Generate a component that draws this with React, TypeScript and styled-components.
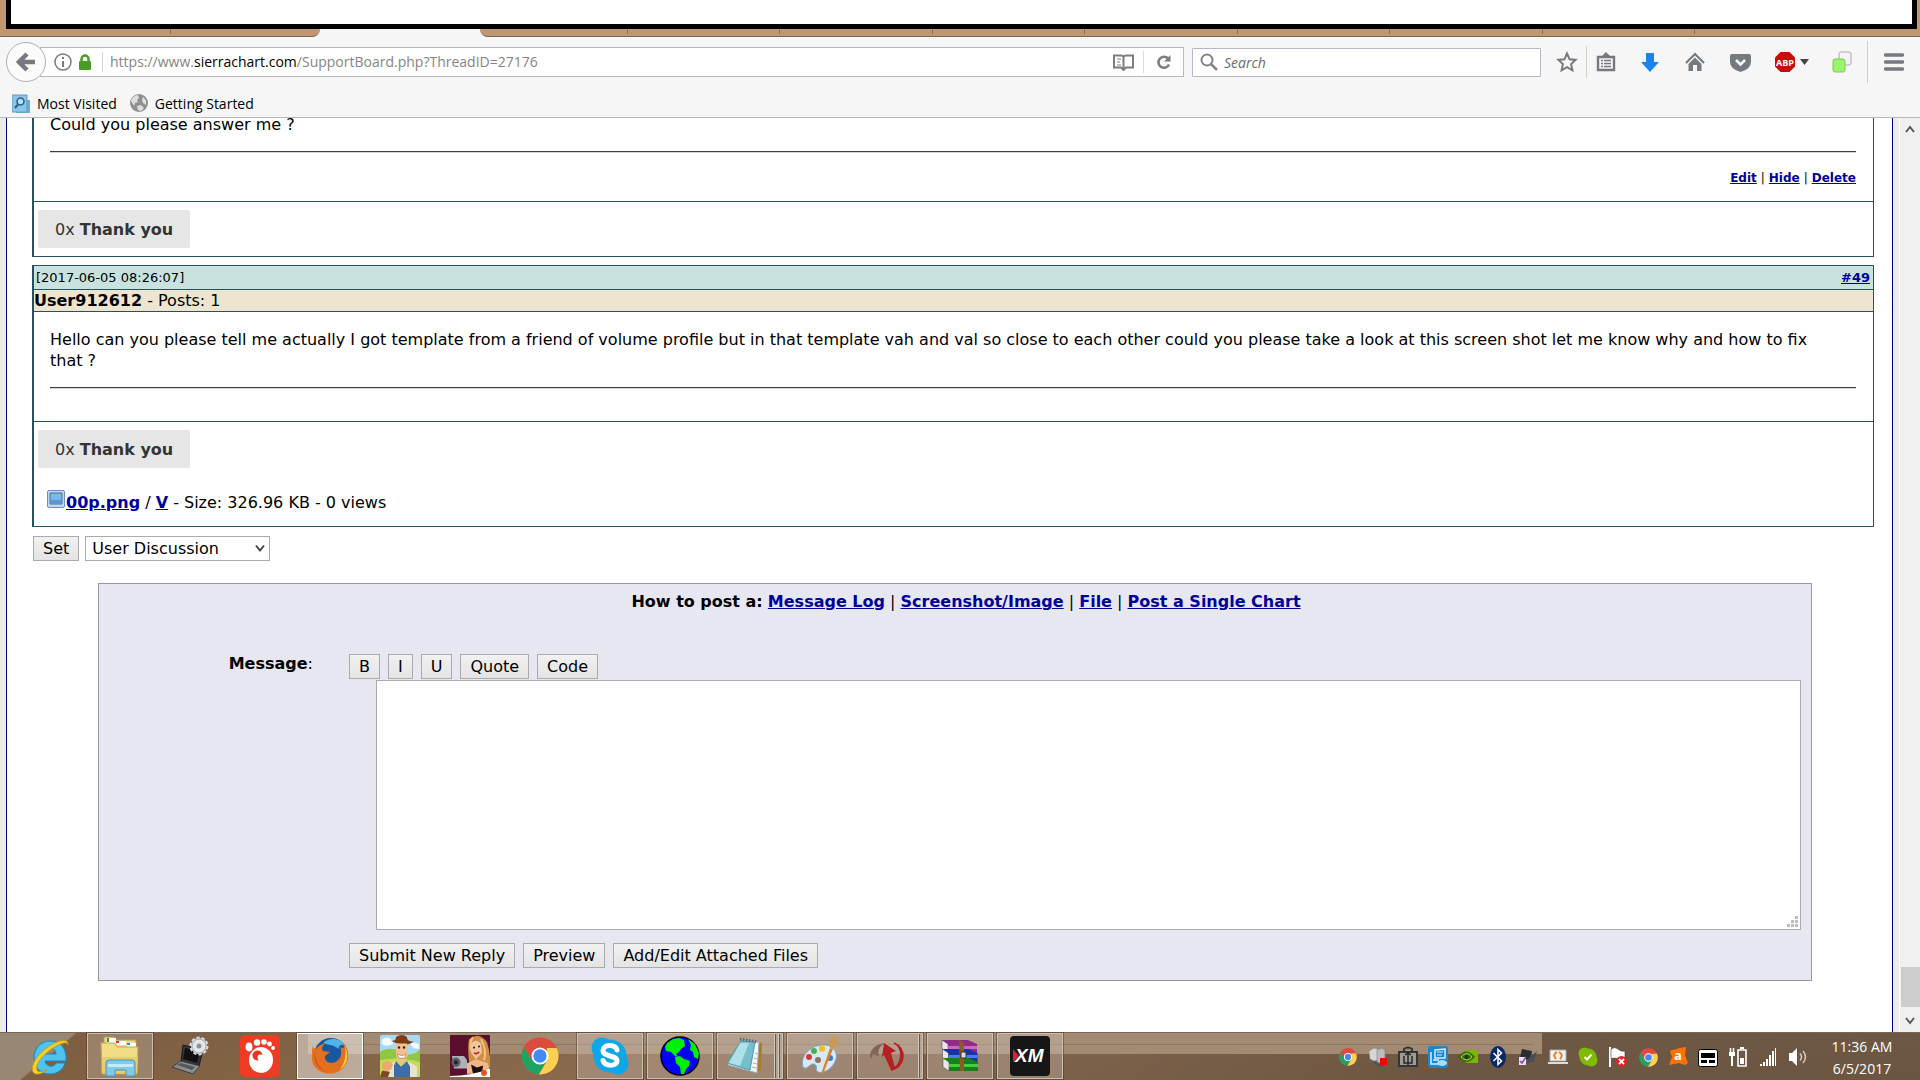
import React from "react";
import styled, { createGlobalStyle } from "styled-components";

const ui = `"Open Sans", "Noto Sans", sans-serif`;
const page = `Verdana, "DejaVu Sans", sans-serif`;
const teal = "#24525e";

const Global = createGlobalStyle`
  * { box-sizing: border-box; }
  body { margin: 0; background: #fff; font-family: ${page}; font-size: 16px; color: #000; }
  button, input, select, textarea { font: inherit; color: inherit; margin: 0; }
  svg { display: block; }
`;

const Screen = styled.div`
  display: flex;
  flex-direction: column;
  height: 100vh;
  overflow: hidden;
`;

/* ---------- window top ---------- */
const TopEdge = styled.div`
  background: #c19670;
  padding: 0 3px 0 6px;
`;
const Frame = styled.div`
  height: 29px;
  background: #fff;
  border: solid #000;
  border-width: 0 5px 5px;
`;
const TabStrip = styled.div`
  display: flex;
  height: 8px;
  flex: none;
  background: #f6f6f6;
`;
const Tab = styled.div<{ $w?: number; $end?: "left" | "right" }>`
  flex: ${(p) => (p.$w ? `0 0 ${p.$w}px` : "1")};
  background: linear-gradient(#8d6c50, #8d6c50) right 0 top 0 / ${(p) => (p.$end === "right" || !p.$w ? 0 : 1)}px 5px no-repeat #c19670;
  border-bottom: 1px solid #7c6450;
  border-bottom-right-radius: ${(p) => (p.$end === "right" ? 10 : 0)}px;
  border-bottom-left-radius: ${(p) => (p.$end === "left" ? 10 : 0)}px;
`;
const ActiveTab = styled.div`
  flex: 0 0 160px;
`;

/* ---------- browser chrome ---------- */
const Chrome = styled.header`
  flex: none;
  background: #f6f6f6;
  border-bottom: 1px solid #b9b9b9;
  font-family: ${ui};
`;
const NavBar = styled.div`
  display: flex;
  align-items: center;
  height: 50px;
  padding-left: 6px;
`;
const BackButton = styled.button`
  width: 40px;
  height: 40px;
  padding: 0;
  border: 1px solid #a9b1bb;
  border-radius: 50%;
  background: #fbfbfb;
  display: grid;
  place-items: center;
  z-index: 1;
`;
const UrlBar = styled.div`
  flex: 1;
  display: flex;
  align-items: center;
  height: 30px;
  margin-left: -6px;
  padding-left: 13px;
  background: #fff;
  border: 1px solid #b4bac5;
`;
const SiteInfo = styled.div`
  display: flex;
  align-items: center;
  gap: 6px;
  height: 20px;
  padding-right: 10px;
  margin-right: 7px;
  border-right: 1px solid #d8d8d8;
`;
const Url = styled.div`
  flex: 1;
  font-size: 14px;
  line-height: 20px;
  color: #858585;
  white-space: nowrap;
  outline: none;
  b { font-weight: 400; color: #000; }
`;
const BarButton = styled.button<{ $line?: boolean }>`
  width: 40px;
  height: 22px;
  padding: 0;
  border: 0;
  border-left: ${(p) => (p.$line ? "1px solid #dcdcdc" : "0")};
  background: none;
  display: grid;
  place-items: center;
`;
const SearchBox = styled.label`
  display: flex;
  align-items: center;
  gap: 6px;
  width: 349px;
  height: 29px;
  margin-left: 8px;
  padding-left: 7px;
  background: #fff;
  border: 1px solid #b4bac5;
  border-radius: 1px;
  input {
    flex: 1;
    border: 0;
    padding: 0;
    outline: none;
    background: none;
    font-size: 14px;
  }
  input::placeholder { font-style: italic; color: #6b6b6b; opacity: 1; }
`;
const Tools = styled.div`
  display: flex;
  align-items: center;
  margin-left: 7px;
`;
const Tool = styled.button<{ $w: number }>`
  width: ${(p) => p.$w}px;
  height: 40px;
  padding: 0;
  border: 0;
  background: none;
  display: flex;
  align-items: center;
  justify-content: center;
  gap: 4px;
`;
const ToolLine = styled.span<{ $h: number }>`
  width: 1px;
  height: ${(p) => p.$h}px;
  background: #cfcfcf;
`;
const Bookmarks = styled.nav`
  display: flex;
  align-items: center;
  gap: 13px;
  height: 30px;
  padding: 4px 0 0 12px;
  a {
    display: flex;
    align-items: center;
    gap: 7px;
    font-size: 14px;
    line-height: 20px;
    color: #000;
    text-decoration: none;
  }
`;

/* ---------- page ---------- */
const Viewport = styled.div`
  flex: 1;
  min-height: 0;
  display: flex;
  overflow: hidden;
  background: #ebedec;
  padding-left: 6px;
`;
const Board = styled.main`
  flex: 1;
  min-width: 0;
  background: #fff;
  border: solid #00008f;
  border-width: 0 1px;
  padding: 0 18px 0 25px;
  margin-right: 6px;
`;
const Post = styled.article<{ $cut?: boolean }>`
  border: 1px solid ${teal};
  border-left-width: 2px;
  margin-top: ${(p) => (p.$cut ? "-22px" : "8px")};
`;
const PostTop = styled.div`
  display: flex;
  justify-content: space-between;
  align-items: center;
  height: 24px;
  padding: 0 3px 0 2px;
  background: #c8e3df;
  border-bottom: 1px solid ${teal};
  font-size: 13px;
`;
const PostUser = styled.div`
  height: 22px;
  line-height: 21px;
  background: #ede5cf;
  border-bottom: 1px solid ${teal};
`;
const Body = styled.div`
  padding: 17px 17px 0 16px;
  border-bottom: 1px solid ${teal};
  p { margin: 0; padding-right: 24px; line-height: 21px; }
  hr {
    height: 2px;
    margin: 16px 0 0;
    border: 0;
    border-top: 1px solid #404040;
    background: #d4d4d4;
  }
`;
const Links = styled.div`
  display: flex;
  justify-content: flex-end;
  gap: 4px;
  height: 48px;
  padding-top: 17px;
  font-size: 12px;
  line-height: 16px;
`;
const Blank = styled.div`
  height: 32px;
`;
const A = styled.a`
  color: #00009c;
  font-weight: 700;
  text-decoration: underline;
`;
const Foot = styled.div`
  padding: 8px 4px;
`;
const Thanks = styled.button`
  display: block;
  height: 38px;
  padding: 0 17px;
  border: 0;
  border-radius: 2px;
  background: #e6e6e6;
  color: #333;
`;
const Attachment = styled.div`
  display: flex;
  align-items: center;
  height: 40px;
  margin: 14px 0 -4px 9px;
  svg { margin: -7px 1px 0 0; }
`;
const Control = styled.button`
  height: 25px;
  padding: 0 9px;
  border: 1px solid #ababab;
  background: linear-gradient(#f1f1f1, #e4e4e4);
  line-height: 20px;
  white-space: nowrap;
`;
const SetRow = styled.div`
  display: flex;
  gap: 6px;
  margin: 9px 0 0 1px;
`;
const SelectWrap = styled.div`
  position: relative;
  select {
    width: 185px;
    height: 25px;
    padding: 0 6px;
    border: 1px solid #ababab;
    border-radius: 0;
    background: #fff;
    appearance: none;
  }
  svg { position: absolute; right: 5px; top: 8px; pointer-events: none; }
`;
const Reply = styled.form`
  margin: 22px 62px 0 66px;
  padding: 8px 10px 12px;
  background: #e7e7f1;
  border: 1px solid #989898;
`;
const HowTo = styled.div`
  padding-left: 22px;
  text-align: center;
  line-height: 20px;
`;
const Fields = styled.div`
  display: grid;
  grid-template-columns: 204px 1fr;
  column-gap: 36px;
  margin-top: 42px;
`;
const FieldLabel = styled.label`
  text-align: right;
  line-height: 20px;
`;
const Buttons = styled.div<{ $gap: number }>`
  display: flex;
  gap: ${(p) => p.$gap}px;
`;
const AreaWrap = styled.div`
  position: relative;
  margin: 1px 0 13px 27px;
  textarea {
    display: block;
    width: 100%;
    height: 250px;
    border: 1px solid #ababb2;
    background: #fff;
    resize: none;
    outline: none;
  }
  svg { position: absolute; right: 3px; bottom: 3px; }
`;
const Scroll = styled.div`
  width: 21px;
  display: flex;
  flex-direction: column;
  align-items: center;
  padding: 7px 0;
  background: #f0f0f0;
  border-left: 1px solid #fff;
`;
const Thumb = styled.div`
  width: 19px;
  height: 40px;
  margin: auto 0 10px;
  background: #cdcdcd;
`;

/* ---------- taskbar ---------- */
const Taskbar = styled.footer`
  flex: none;
  display: flex;
  height: 48px;
  padding-left: 17px;
  border-top: 1px solid #786758;
  background:
    linear-gradient(#8f7862, #8f7862) 308px 11px / 1225px 1px no-repeat,
    linear-gradient(#a38a73, #a38a73) 308px 0 / 1234px 21px no-repeat,
    linear-gradient(140deg, #988773 0 48px, transparent 50px) 0 0 / 110px 48px no-repeat,
    linear-gradient(170deg, rgba(60, 40, 25, 0.12), transparent 40%, rgba(60, 40, 25, 0.2)),
    linear-gradient(90deg, #846444, #8a6a4e 30%, #80654d 55%, #745d47 75%, #77614c);
`;
const Apps = styled.div`
  display: flex;
  gap: 4px;
  flex: 1;
`;
const TaskButton = styled.button<{ $open?: boolean; $active?: boolean; $stack?: number }>`
  position: relative;
  width: 66px;
  height: 46px;
  padding: 0 ${(p) => (p.$stack ? 4 * p.$stack + 2 : 0)}px 0 0;
  border: ${(p) => (p.$active ? "1px solid #fff" : p.$open ? "1px solid #cbbfb4" : "1px solid transparent")};
  outline: ${(p) => (p.$open || p.$active ? "1px solid rgba(70,50,35,.45)" : "none")};
  background: ${(p) => (p.$active ? "rgba(255,255,255,.45)" : p.$open ? "rgba(235,225,220,.26)" : "none")};
  display: grid;
  place-items: center;
  &::after {
    content: "";
    display: ${(p) => (p.$stack ? "block" : "none")};
    position: absolute;
    top: 0;
    bottom: 0;
    right: 0;
    width: ${(p) => 4 * (p.$stack || 0)}px;
    background: repeating-linear-gradient(90deg, #d3c8be 0 1px, #6b5848 1px 2px, #b5a393 2px 4px);
  }
`;
const Tray = styled.div`
  display: flex;
  align-items: center;
  gap: 8px;
  padding-top: 1px;
  button {
    width: 22px;
    height: 24px;
    padding: 0;
    border: 0;
    background: none;
    display: grid;
    place-items: center;
  }
`;
const Clock = styled.time`
  width: 111px;
  padding: 3px 5px 0 0;
  font-family: ${ui};
  font-size: 14px;
  line-height: 22px;
  text-align: center;
  color: #fff;
`;

/* ---------- drawings ---------- */
const ChromeLogo = ({ s }: { s: number }) => (
  <svg width={s} height={s} viewBox="0 0 40 40">
    <circle cx="20" cy="20" r="19.5" fill="#dd4b3e" />
    <path d="M3.2 10.5A19.5 19.5 0 0 0 19 39.4L27.5 24.5 20 20 12 24.5z" fill="#1da462" />
    <path d="M37.6 11.5A19.5 19.5 0 0 1 18.8 39.4L28 24 27 11.5z" fill="#fdd150" />
    <path d="M3.2 10.5 11.5 24.5 20 11.5H37.6A19.5 19.5 0 0 0 3.2 10.5z" fill="#dd4b3e" />
    <circle cx="20" cy="20" r="9" fill="#fff" />
    <circle cx="20" cy="20" r="7" fill="#4587f3" />
  </svg>
);

const Explorer = () => (
  <svg width="40" height="42" viewBox="0 0 40 42">
    <path d="M4 2h10l2 3h20v14H4z" fill="#eadb97" stroke="#b39a4f" />
    <path d="M7 3h9v5H7zM17 6h9v4h-9zM27 8h9v4h-9z" fill="#fff" />
    <path d="M7 3h2v4H7z" fill="#2c9a3b" /><path d="M16 6h3v2h-3z" fill="#d33" /><path d="M27 8h3v2h-3z" fill="#248be0" />
    <path d="M1 8h13l3 4h21l-1 27H2z" fill="#f1dd85" stroke="#c6a84f" />
    <path d="M2 22h36l-1 16H2z" fill="#e9cd68" />
    <path d="M6 41V28q0-3 3-3h23q3 0 3 3v13h-9v-6H15v6z" fill="#82cae8" stroke="#4596bd" />
    <path d="M8 29h25v3H8z" fill="#c4ebf8" />
  </svg>
);

const Laptop = () => (
  <svg width="38" height="40" viewBox="0 0 38 40">
    <path d="M12 9 32 14 28 30 10 25z" fill="#33363a" stroke="#17191b" />
    <path d="m14 12 15 4-3 11-14-4z" fill="#111" />
    <path d="m10 25 19 5-7 8L1 31z" fill="#8a8d90" stroke="#3b3d40" />
    <path d="m10 27 14 4-3 3-15-5z" fill="#55585b" />
    <circle cx="28" cy="10" r="8" fill="#d6d9dd" stroke="#d6d9dd" strokeWidth="3" strokeDasharray="3 2" />
    <circle cx="28" cy="10" r="7" fill="#e4e6e9" stroke="#9aa" />
    <circle cx="28" cy="10" r="2.5" fill="#8d9299" />
  </svg>
);

const IE = () => (
  <svg width="42" height="42" viewBox="0 0 42 42">
    <path d="M37 26H16c1 6 9 7 11 2h9c-2 7-8 11-15 11C11 39 5 32 5 23 5 13 12 6 21 6c11 0 17 8 16 20zM16 19h11c0-7-10-8-11 0z" fill="#4cc3f1" stroke="#1f86bf" />
    <path d="M39 10c1-6-7-6-17 0C9 18 1 30 4 37c2 4 9 2 14-2-5 2-9 2-10 0-2-5 5-15 16-22 8-5 14-7 15-3z" fill="#f7cf24" stroke="#c49212" strokeWidth=".8" />
  </svg>
);

const Gom = () => (
  <svg width="40" height="42" viewBox="0 0 40 42">
    <rect width="40" height="42" rx="5" fill="#ee3b24" />
    <ellipse cx="21" cy="25" rx="12" ry="13" fill="#fff" />
    <circle cx="17.500" cy="20.500" r="5" fill="#e9321f" /><circle cx="20.500" cy="22.500" r="3" fill="#fff" />
    <ellipse cx="9" cy="12" rx="3.4" ry="4.4" fill="#fff" />
    <circle cx="17" cy="7.5" r="3.2" fill="#fff" /><circle cx="24" cy="7" r="2.8" fill="#fff" /><circle cx="29.5" cy="9" r="2.4" fill="#fff" /><circle cx="33" cy="13" r="2" fill="#fff" />
  </svg>
);

const Firefox = () => (
  <svg width="38" height="38" viewBox="0 0 38 38">
    <circle cx="20" cy="18" r="17" fill="#19589d" />
    <path d="M12 6c6-6 17-5 22 2-4-1-7 1-6 4-5-4-10-4-16-6z" fill="#4fb4e8" />
    <path d="M2 8c0 3 1 4 3 4 2-3 5-5 9-5-3 2-4 5-2 7l7 1-5 4c-1 6 6 9 12 5 5-3 5-10 3-14 5 3 4 0 3-4 5 5 7 14 3 21-4 8-13 11-21 9C4 34 0 26 1 18c0-4 0-7 1-10z" fill="#e4701e" />
    <path d="M34 9c4 8 3 18-5 24 4-6 7-15 5-24z" fill="#fbd03b" />
    <path d="M4 15c-2 10 4 18 13 20C8 32 4 25 4 15z" fill="#c6401b" />
  </svg>
);

const Farmer = () => (
  <svg width="40" height="42" viewBox="0 0 40 40" preserveAspectRatio="none">
    <rect width="40" height="40" rx="2" fill="#a7daf2" />
    <path d="M2 4q6-3 10 1t-4 5-6-6zM30 8q5-2 9 1v4q-6 1-9-5z" fill="#f4fbff" />
    <path d="M0 16q10-6 20 0t20-2v26H0z" fill="#8fc744" />
    <path d="M0 24q20-4 40 2v14H0z" fill="#c9d957" />
    <path d="M10 5q6 2 6-3 6-4 11 0 0 5 7 4-5 4-12 3T10 5z" fill="#7d3b18" />
    <path d="M16 8h11l1 11q-3 7-7 7t-5-7z" fill="#f2c08d" />
    <path d="M17 18q6 3 9 0l-1 4h-6z" fill="#fff" stroke="#a75a2c" strokeWidth=".5" />
    <circle cx="19" cy="12" r="1.2" fill="#222" /><circle cx="24" cy="12" r="1.2" fill="#222" />
    <path d="M8 40V29l7-4 6 4 7-4 9 5v10z" fill="#e9e2cf" />
    <path d="M14 40V29l2-4 5 5 6-5 3 5v10z" fill="#3f6da5" />
    <path d="M2 27l6-3 5 4-2 5-8 2z" fill="#eaa96f" /><path d="M2 34l8 1-2 5H0z" fill="#7c4a22" />
  </svg>
);

const Model = () => (
  <svg width="40" height="42" viewBox="0 0 40 40" preserveAspectRatio="none">
    <rect width="40" height="40" fill="#5a0f2d" />
    <path d="M19 4q10-8 18 3 4 12 3 24l-8 4-12-4q-3-16-1-27z" fill="#cf8d45" />
    <path d="M21 8q5-5 10 0l1 9-6 6-5-6z" fill="#f3c59c" />
    <path d="M23 2q-4 5-2 13M31 4q6 10 3 20" stroke="#f0c67c" strokeWidth="2" fill="none" />
    <path d="M24 17q3 2 5-1" stroke="#b3202f" strokeWidth="1.5" fill="none" />
    <circle cx="24" cy="12" r="1" fill="#213" /><circle cx="29" cy="11" r="1" fill="#213" />
    <path d="M17 27l9-4 12 4 2 10H17z" fill="#efb78a" />
    <path d="M21 28l6 3 6-2-1 8h-9z" fill="#1c1114" />
    <path d="M2 20h12l3 4v8H4z" fill="#aeb1b8" /><circle cx="6" cy="26" r="4.5" fill="#5b5e66" /><circle cx="6" cy="26" r="2" fill="#222" />
    <path d="M0 40v-1q22 0 40-7v8z" fill="#fff" /><circle cx="34" cy="36" r="3" fill="#e8541c" />
  </svg>
);

const Skype = () => (
  <svg width="38" height="38" viewBox="0 0 38 38">
    <circle cx="11" cy="11" r="10.5" fill="#0ba7e6" /><circle cx="27" cy="27" r="10.5" fill="#0ba7e6" /><circle cx="19" cy="19" r="16.5" fill="#0ba7e6" />
    <path d="M26 13c-1-4-5-4.500-7.500-4.500-4 0-6.500 2-6.500 5 0 7 14 4 14 10.500 0 5.500-12 6-14-.5" fill="none" stroke="#fff" strokeWidth="5" strokeLinecap="round" />
  </svg>
);

const Globe = () => (
  <svg width="40" height="40" viewBox="0 0 40 40">
    <circle cx="20" cy="20" r="19" fill="#0000fe" stroke="#000" strokeWidth="1.500" />
    <path d="M7 7l6-4 6-1 5 2 1 6-4 3-2 3-3 2 2 3-3-1-4-4-5-1-1-4z" fill="#00f000" />
    <path d="M15 21l5-1 4 3 6 2-1 5-3 3-2 5-3 0-1-7-4-4z" fill="#00f000" />
    <path d="M28 3l7 5 4 9-1 6-4-2-1-5-3-2 1-5z" fill="#00f000" />
  </svg>
);

const Notepad = () => (
  <svg width="38" height="38" viewBox="0 0 38 38">
    <path d="M31 5l5 1-1 27-4 2z" fill="#a87a30" />
    <path d="M16 3l17 2-2 31L2 28z" fill="#f2f6f7" stroke="#9ab" />
    <path d="M15 4l14 1-5 28L1 26z" fill="#74bfcd" stroke="#4f98a8" />
    <path d="M14 6h9l-9 23-11-3z" fill="#c6eaf0" opacity=".75" />
    <path d="M14 2l18 3" stroke="#666" strokeWidth="3" strokeDasharray="1.500 1.500" />
    <path d="M26 30l5 1M27 26l4 1M28 21l3 1M29 16l3 1" stroke="#a8b8bd" />
  </svg>
);

const Paint = () => (
  <svg width="40" height="40" viewBox="0 0 40 40">
    <path d="M3 31C0 20 10 10 22 9c10-1 16 6 14 14-3 10-13 15-18 13-4-2 1-6-4-8-4-1-7 7-11 3z" fill="#d5e9f7" stroke="#7ba6c8" />
    <circle cx="18" cy="24" r="3" fill="#8b7460" />
    <circle cx="9" cy="21" r="3" fill="#e03535" /><circle cx="14" cy="15" r="3" fill="#49b04a" /><circle cx="22" cy="12.500" r="3.200" fill="#f3bd27" /><circle cx="30" cy="22" r="3" fill="#3d77dc" />
    <path d="M21 38l9-26 3 1-10 25z" fill="#dd8127" /><path d="M30 12l-1-8 4-4 6 2-1 5-5 6z" fill="#c9995a" />
  </svg>
);

const RedV = () => (
  <svg width="38" height="34" viewBox="0 0 38 34">
    <path d="M3 20C0 12 7 5 17 4c-5 3-8 7-6 13l-6-2z" fill="#7b5a50" opacity=".85" />
    <path d="M16 4l12 8-5 2 4 15-4 2-7-15-2 2z" fill="#b51f26" />
    <path d="M26 4c9 4 10 21-3 27 15-3 16-22 3-27z" fill="#b51f26" stroke="#b51f26" strokeWidth="1.500" />
  </svg>
);

const WinRar = () => (
  <svg width="38" height="34" viewBox="0 0 38 34">
    {[["#8f2c88", "#c66abf"], ["#1634a5", "#4a7cf0"], ["#177f1b", "#43cf3d"]].map(([d, l], i) => (
      <g key={d} transform={`translate(${i / 2} ${i * 9})`}>
        <path d="M1 1l6 4v9l-6-4z" fill="#e8e8e8" stroke="#555" strokeWidth=".6" />
        <path d="M1 1h26l9 4H7z" fill={d} />
        <path d="M7 5h29v9H7z" fill={d} /><path d="M7 7h29v3H7z" fill={l} />
      </g>
    ))}
    <path d="M18 1l5 3v28h-4z" fill="#8b5a25" /><path d="M20 13h5v6h-5z" fill="#ddd" stroke="#333" />
  </svg>
);

const Xm = () => (
  <svg width="40" height="40" viewBox="0 0 40 40">
    <rect width="40" height="40" rx="4" fill="#161616" />
    <path d="M3 13l6 7-6 6z" fill="#e01f26" />
    <text x="5" y="26" fontFamily="Liberation Sans, sans-serif" fontWeight="700" fontStyle="italic" fontSize="19" fill="#fff">XM</text>
  </svg>
);

const g = "#757a80";

const trayIcons: [string, React.ReactNode][] = [
  ["Chrome", <ChromeLogo s={18} />],
  ["Devices", <svg width="20" height="20" viewBox="0 0 20 20"><path d="M1 4l5-3 4 1v11l-4 1-4-2z" fill="#d6d6d6" stroke="#8a8a8a" strokeWidth=".6" /><path d="M9 3l5-2 3 2v11l-5 2-3-1z" fill="#bdbdbd" stroke="#7c7c7c" strokeWidth=".6" /><path d="M6 15l6 4 4-2" fill="none" stroke="#3e5a5a" strokeWidth="2" /><path d="M12 11h7v7h-7z" fill="#f00" /></svg>],
  ["Security", <svg width="20" height="22" viewBox="0 0 20 22"><path d="M6 6V3q4-3 8 0v3" fill="none" stroke="#30363a" strokeWidth="2" /><path d="M1 6h18v14H1z" fill="#a39a8d" stroke="#30363a" strokeWidth="2" /><path d="M10 7v12M6 10v7h8v-7M7 9l3-2 3 2" fill="none" stroke="#22282c" strokeWidth="1.500" /></svg>],
  ["Display", <svg width="20" height="22" viewBox="0 0 20 22"><rect width="20" height="22" rx="3" fill="#1887d2" /><path d="M7 4l10-1v9H7zM3 6v12h7M5 14h6" fill="none" stroke="#d8efff" strokeWidth="1.500" /><path d="M9 6h6M9 9h5" stroke="#d8efff" /><ellipse cx="14" cy="17" rx="5" ry="3" fill="#a9dcf8" /></svg>],
  ["NVIDIA", <svg width="20" height="16" viewBox="0 0 20 16"><path d="M8 1h12v13H8z" fill="#76b900" /><path d="M0 8q8-11 17 0-9 10-17 0z" fill="#3c6d0a" /><path d="M3 8q6-7 11 0-5 6-11 0z" fill="none" stroke="#a9d94d" /><circle cx="8.500" cy="8" r="2" fill="#1d3707" /></svg>],
  ["Bluetooth", <svg width="16" height="22" viewBox="0 0 16 22"><ellipse cx="8" cy="11" rx="8" ry="11" fill="#0a2a66" /><path d="M3.500 7l8 8L8 18.500v-15L11.500 7l-8 8" fill="none" stroke="#fff" strokeWidth="1.500" /></svg>],
  ["Tablet", <svg width="20" height="20" viewBox="0 0 20 20"><path d="M4 2l10 2-2 9-10-2z" fill="#2b2d33" /><path d="M10 12l9-8-3 10-8 3z" fill="#4b4e57" /><path d="M1 10h7v8H1z" fill="#e8e2f0" /><path d="M2 14l2 2 4-6" fill="none" stroke="#8a3fae" strokeWidth="1.500" /></svg>],
  ["Java", <svg width="20" height="16" viewBox="0 0 20 16"><path d="M2 1h16v11H2z" fill="#f3f3f3" stroke="#aaa" /><path d="M0 13h20v2H0z" fill="#dcdcdc" /><path d="M9 3q-5 3-1 7M11 3q5 3 1 7" fill="none" stroke="#ee7b1a" strokeWidth="2" /></svg>],
  ["Skype", <svg width="20" height="20" viewBox="0 0 20 20"><circle cx="6.500" cy="6.500" r="6" fill="#7fba00" /><circle cx="13.500" cy="13.500" r="6" fill="#7fba00" /><circle cx="10" cy="10" r="8.500" fill="#7fba00" /><path d="M6.500 10l2.500 2.500 4.500-5" fill="none" stroke="#fff" strokeWidth="2" /></svg>],
  ["Action Center", <svg width="20" height="22" viewBox="0 0 20 22"><path d="M2 1v20" stroke="#fff" strokeWidth="2" /><path d="M3 3q4-3 7 0t7 2v8q-3 2-7 0t-7 0z" fill="#fff" stroke="#333" strokeWidth=".6" /><circle cx="13.500" cy="15.500" r="5.500" fill="#e0212b" /><path d="M11 13l5 5M16 13l-5 5" stroke="#fff" strokeWidth="1.800" /></svg>],
  ["Chrome", <ChromeLogo s={19} />],
  ["Avast", <svg width="20" height="22" viewBox="0 0 20 22"><path d="M4 4q4 0 7-2l7-1-1 8 3 8-3 2-6-2-5 1-5 1 3-8-2-6z" fill="#ff7200" /><text x="6" y="14" fontFamily="Open Sans, sans-serif" fontWeight="700" fontSize="13" fill="#fff">a</text></svg>],
  ["Touchpad", <svg width="20" height="20" viewBox="0 0 20 20"><rect x=".5" y="2.500" width="19" height="17" rx="2" fill="#fff" stroke="#000" /><path d="M3 6h14v5H3zM3 13h6v3H3zM11 13h6v3h-6z" fill="#000" /></svg>],
  ["Battery", <svg width="20" height="20" viewBox="0 0 20 20"><path d="M2.500 1v4M5.500 1v4" stroke="#fff" strokeWidth="1.500" /><path d="M1 5h6v4H1zM3 9h2v10H3z" fill="#fff" /><path d="M10 3h8v16h-8z" fill="none" stroke="#fff" strokeWidth="1.600" /><path d="M12 0h4v2h-4zM12 11h4v6h-4z" fill="#fff" /></svg>],
  ["Network", <svg width="18" height="20" viewBox="0 0 18 20"><path d="M1 17h2v2H1zM4 15h2v4H4zM7 12h2v7H7zM10 8h2v11h-2zM13 4h2v15h-2zM16 1h1v18h-1z" fill="#fff" /></svg>],
  ["Volume", <svg width="20" height="20" viewBox="0 0 20 20"><path d="M1 6h3l5-5v18l-5-5H1z" fill="#fff" /><path d="M12 6.500q3 3.500 0 7M15 4q5 6 0 12" fill="none" stroke="#d3c9bf" strokeWidth="1.500" /></svg>],
];

const ThankYou = () => (
  <Thanks type="button">0x <b>Thank you</b></Thanks>
);

export default function App() {
  return (
    <Screen>
      <Global />
      <TopEdge><Frame /></TopEdge>
      <TabStrip>
        <Tab $w={171} />
        <Tab $w={149} $end="right" />
        <ActiveTab />
        <Tab $w={148} $end="left" />
        {[0, 1, 2, 3, 4, 5, 6].map((i) => <Tab key={i} $w={i % 2 ? 153 : 152} />)}
        <Tab />
      </TabStrip>
      <Chrome>
        <NavBar>
          <BackButton aria-label="Back">
            <svg width="20" height="20" viewBox="0 0 20 20"><path d="M19 10H4M11 2l-8 8 8 8" fill="none" stroke={g} strokeWidth="4.500" /></svg>
          </BackButton>
          <UrlBar>
            <SiteInfo>
              <svg width="18" height="18" viewBox="0 0 18 18"><circle cx="9" cy="9" r="8" fill="none" stroke="#7b7b7b" strokeWidth="1.500" /><path d="M8 4h2v2H8zM8 8h2v6H8z" fill="#7b7b7b" /></svg>
              <svg width="14" height="16" viewBox="0 0 14 16"><path d="M3.500 8V5a3.500 3.500 0 0 1 7 0v3" fill="none" stroke="#4c9b26" strokeWidth="2.500" /><rect x="1" y="7" width="12" height="9" rx="1" fill="#4c9b26" /></svg>
            </SiteInfo>
            <Url role="textbox" aria-label="Address">https://www.<b>sierrachart.com</b>/SupportBoard.php?ThreadID=27176</Url>
            <BarButton aria-label="Reader view">
              <svg width="21" height="17" viewBox="0 0 21 17"><path d="M1 1.500h7q2 0 2.500 1.500Q11 1.500 13 1.500h7v12h-7L10.500 16 8 13.500H1zM10.500 3v11" fill="none" stroke="#7d7d7d" strokeWidth="2" /><path d="M4 5h4M4 8h3M4 11h4" stroke="#7d7d7d" /></svg>
            </BarButton>
            <BarButton $line aria-label="Reload">
              <svg width="16" height="16" viewBox="0 0 16 16"><path d="M13 10.500a5.500 5.500 0 1 1-1-6" fill="none" stroke="#7d7d7d" strokeWidth="2.600" /><path d="M14.500 1v6.500H8z" fill="#7d7d7d" /></svg>
            </BarButton>
          </UrlBar>
          <SearchBox>
            <svg width="18" height="18" viewBox="0 0 18 18"><circle cx="7" cy="7" r="5.500" fill="none" stroke="#858585" strokeWidth="2" /><path d="M11 11l6 6" stroke="#858585" strokeWidth="2.500" /></svg>
            <input type="text" placeholder="Search" aria-label="Search" />
          </SearchBox>
          <Tools>
            <Tool $w={38} aria-label="Bookmark"><svg width="22" height="22" viewBox="0 0 22 22"><path d="M11 2.500l2.600 5.800 6 .6-4.500 4.200 1.300 6.200L11 16.200l-5.400 3.100 1.300-6.200L2.400 8.900l6-.6z" fill="none" stroke={g} strokeWidth="2" /></svg></Tool>
            <ToolLine $h={32} />
            <Tool $w={38} aria-label="Bookmarks list"><svg width="20" height="20" viewBox="0 0 20 20"><path d="M2 5h16v13H2z" fill="none" stroke={g} strokeWidth="2.400" /><path d="M6 4l4-4 4 4z" fill={g} /><path d="M5 8.500h2M8 8.500h7M5 11.500h2M8 11.500h7M5 14.500h2M8 14.500h7" stroke={g} strokeWidth="1.500" /></svg></Tool>
            <Tool $w={50} aria-label="Downloads"><svg width="20" height="20" viewBox="0 0 20 20"><path d="M6 1h8v9h5l-9 10L1 10h5z" fill="#1a83ec" /></svg></Tool>
            <Tool $w={40} aria-label="Home"><svg width="20" height="20" viewBox="0 0 20 20"><path d="M1 11l9-9 9 9" fill="none" stroke={g} strokeWidth="2.200" /><path d="M3.500 12L10 5.500l6.500 6.500v7H12v-6H8v6H3.500z" fill={g} /></svg></Tool>
            <Tool $w={50} aria-label="Pocket"><svg width="21" height="19" viewBox="0 0 21 19"><path d="M2 1h17q2 0 2 2v6q0 7-10.500 10Q0 16 0 9V3q0-2 2-2z" fill={g} /><path d="M6 7l4.500 4.500L15 7" fill="none" stroke="#fff" strokeWidth="2.500" /></svg></Tool>
            <Tool $w={52} aria-label="Adblock Plus">
              <svg width="22" height="22" viewBox="0 0 22 22"><path d="M6.500 1h9L21 6.500v9L15.500 21h-9L1 15.500v-9z" fill="#cc0a0a" /><text x="11" y="14.500" textAnchor="middle" fontFamily="Open Sans, sans-serif" fontWeight="700" fontSize="9" fill="#fff">ABP</text></svg>
              <svg width="9" height="6" viewBox="0 0 9 6"><path d="M0 0h9L4.500 6z" fill="#444" /></svg>
            </Tool>
            <Tool $w={50} aria-label="Extension"><svg width="20" height="22" viewBox="0 0 20 22"><rect x="7" y="1" width="12" height="13" rx="2" fill="#f4f4f4" stroke="#aaa" /><rect x="1" y="8" width="12" height="13" rx="2" fill="#99f56c" stroke="#7ec65c" /></svg></Tool>
            <ToolLine $h={42} />
            <Tool $w={52} aria-label="Menu"><svg width="20" height="18" viewBox="0 0 20 18"><path d="M1.500 2h17M1.500 9h17M1.500 16h17" stroke={g} strokeWidth="3.500" strokeLinecap="round" /></svg></Tool>
          </Tools>
        </NavBar>
        <Bookmarks>
          <a href="#visited">
            <svg width="18" height="20" viewBox="0 0 18 20"><path d="M6 6h12v13H4z" fill="#6aaed8" /><path d="M0 1h15v17H0z" fill="#8cc5e6" stroke="#5b9cc6" /><circle cx="8.500" cy="7.500" r="3.500" fill="#b9dff2" stroke="#2a618f" strokeWidth="1.600" /><path d="M6 10.500L3 14" stroke="#2a618f" strokeWidth="2" /></svg>
            Most Visited
          </a>
          <a href="#started">
            <svg width="18" height="20" viewBox="0 0 18 20"><circle cx="9" cy="9" r="9" fill="#8f8f8f" /><path d="M1 7q1-5 7-6l1 3-2 2 1 2-3 1-1 3zM7 12l4-1 3 3-3 3-3-1zM13 3l3 3v5l-3-2-1-3z" fill="#dedede" /></svg>
            Getting Started
          </a>
        </Bookmarks>
      </Chrome>

      <Viewport>
        <Board>
          <Post $cut>
            <Body>
              <p>Could you please answer me ?</p>
              <hr />
              <Links><A href="#edit">Edit</A>|<A href="#hide">Hide</A>|<A href="#delete">Delete</A></Links>
            </Body>
            <Foot><ThankYou /></Foot>
          </Post>
          <Post>
            <PostTop><span>[2017-06-05 08:26:07]</span><A href="#49">#49</A></PostTop>
            <PostUser><b>User912612</b> - Posts: 1</PostUser>
            <Body>
              <p>Hello can you please tell me actually I got template from a friend of volume profile but in that template vah and val so close to each other could you please take a look at this screen shot let me know why and how to fix that ?</p>
              <hr />
              <Blank />
            </Body>
            <Foot>
              <ThankYou />
              <Attachment>
                <svg width="18" height="18" viewBox="0 0 18 18"><rect x=".5" y=".5" width="17" height="17" rx="1.500" fill="#c6d6ec" stroke="#6c8fc0" /><path d="M3 3h12v11H3z" fill="#7cb9ea" stroke="#3f6ea8" /><path d="M3.500 10h11v3.500h-11z" fill="#559bd6" /></svg>
                <span><A href="#file">00p.png</A> / <A href="#view">V</A> - Size: 326.96 KB - 0 views</span>
              </Attachment>
            </Foot>
          </Post>
          <SetRow>
            <Control type="button">Set</Control>
            <SelectWrap>
              <select aria-label="Discussion type"><option>User Discussion</option></select>
              <svg width="10" height="9" viewBox="0 0 10 9"><path d="M1 1.500l4 5 4-5" fill="none" stroke="#444" strokeWidth="2" /></svg>
            </SelectWrap>
          </SetRow>
          <Reply>
            <HowTo>
              <b>How to post a:</b> <A href="#log">Message Log</A> | <A href="#shot">Screenshot/Image</A> | <A href="#files">File</A> | <A href="#chart">Post a Single Chart</A>
            </HowTo>
            <Fields>
              <FieldLabel htmlFor="message"><b>Message</b>:</FieldLabel>
              <div>
                <Buttons $gap={8}>
                  {["B", "I", "U", "Quote", "Code"].map((t) => <Control type="button" key={t}>{t}</Control>)}
                </Buttons>
                <AreaWrap>
                  <textarea id="message" />
                  <svg width="12" height="12" viewBox="0 0 12 12"><path d="M9 1h3v3H9zM5 5h3v3H5zM9 5h3v3H9zM1 9h3v3H1zM5 9h3v3H5zM9 9h3v3H9z" fill="#bdbdbd" /></svg>
                </AreaWrap>
                <Buttons $gap={8}>
                  {["Submit New Reply", "Preview", "Add/Edit Attached Files"].map((t) => <Control type="button" key={t}>{t}</Control>)}
                </Buttons>
              </div>
            </Fields>
          </Reply>
        </Board>
        <Scroll>
          <svg width="10" height="8" viewBox="0 0 10 8"><path d="M1 7l4-5 4 5" fill="none" stroke="#555" strokeWidth="2" /></svg>
          <Thumb />
          <svg width="10" height="8" viewBox="0 0 10 8"><path d="M1 1l4 5 4-5" fill="none" stroke="#555" strokeWidth="2" /></svg>
        </Scroll>
      </Viewport>

      <Taskbar>
        <Apps>
          <TaskButton aria-label="Internet Explorer"><IE /></TaskButton>
          <TaskButton $open aria-label="File Explorer"><Explorer /></TaskButton>
          <TaskButton aria-label="Device settings"><Laptop /></TaskButton>
          <TaskButton aria-label="GOM Player"><Gom /></TaskButton>
          <TaskButton $active aria-label="Firefox"><Firefox /></TaskButton>
          <TaskButton aria-label="Farm game"><Farmer /></TaskButton>
          <TaskButton aria-label="Movie game"><Model /></TaskButton>
          <TaskButton aria-label="Chrome"><ChromeLogo s={38} /></TaskButton>
          <TaskButton $open aria-label="Skype"><Skype /></TaskButton>
          <TaskButton $open aria-label="Sierra Chart"><Globe /></TaskButton>
          <TaskButton $open $stack={2} aria-label="Notepad"><Notepad /></TaskButton>
          <TaskButton $open aria-label="Paint"><Paint /></TaskButton>
          <TaskButton $open $stack={1} aria-label="Trading app"><RedV /></TaskButton>
          <TaskButton $open aria-label="WinRAR"><WinRar /></TaskButton>
          <TaskButton $open aria-label="XM"><Xm /></TaskButton>
        </Apps>
        <Tray>
          {trayIcons.map(([name, icon], i) => <button type="button" aria-label={name} key={i}>{icon}</button>)}
        </Tray>
        <Clock>11:36 AM<br />6/5/2017</Clock>
      </Taskbar>
    </Screen>
  );
}
